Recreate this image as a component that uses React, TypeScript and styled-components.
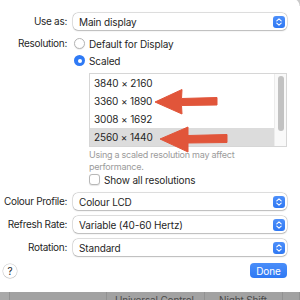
import * as React from 'react';
import styled, { createGlobalStyle } from 'styled-components';

const GlobalStyle = createGlobalStyle`
  html, body {
    margin: 0;
    padding: 0;
    background: #fff;
  }
  body {
    font-family: Inter, "Liberation Sans", sans-serif;
    color: #1f1f1f;
    letter-spacing: -0.15px;
    -webkit-font-smoothing: antialiased;
  }
`;

const Sheet = styled.div`
  position: relative;
  width: 300px;
  height: 300px;
  overflow: hidden;
  background: #fff;
  box-sizing: border-box;
  padding-top: 13px;
  display: flex;
  flex-direction: column;
`;

const Corner = styled.div`
  position: absolute;
  top: 0;
  right: 0;
  width: 8px;
  height: 6px;
  background: radial-gradient(circle at 0 100%, transparent 7px, #c9c9c9 8px);
`;

const FormRow = styled.div<{ $top?: number }>`
  display: grid;
  grid-template-columns: 67px 214px;
  column-gap: 6px;
  align-items: center;
  margin-top: ${p => p.$top ?? 0}px;
`;

const Label = styled.span<{ $start?: boolean }>`
  text-align: right;
  font-size: 10px;
  line-height: 17px;
  letter-spacing: -0.3px;
  white-space: nowrap;
  align-self: ${p => (p.$start ? 'start' : 'center')};
`;

const SelectBox = styled.div`
  height: 17px;
  box-sizing: border-box;
  display: flex;
  align-items: center;
  justify-content: space-between;
  padding: 0 2px 0 6px;
  background: #fff;
  border-radius: 5px;
  box-shadow: 0 0 0 0.5px rgba(0, 0, 0, 0.2), 0 0.5px 1.5px rgba(0, 0, 0, 0.2);
  font-size: 10px;
`;

const Stepper = styled.span`
  width: 12px;
  height: 12px;
  border-radius: 3px;
  background: linear-gradient(#4d8ffa, #2f78f3);
  display: flex;
  align-items: center;
  justify-content: center;
`;

const Options = styled.div`
  display: flex;
  flex-direction: column;
`;

const RadioRow = styled.label`
  display: flex;
  align-items: center;
  gap: 4px;
  height: 17px;
  padding-left: 1px;
  font-size: 10px;
`;

const RadioDot = styled.span<{ $on?: boolean }>`
  width: 11px;
  height: 11px;
  border-radius: 50%;
  box-sizing: border-box;
  background: ${p => (p.$on ? '#2f7af5' : '#fff')};
  border: ${p => (p.$on ? 'none' : '0.5px solid #b5b5b5')};
  box-shadow: ${p => (p.$on ? 'none' : '0 0.5px 1px rgba(0,0,0,0.12)')};
  display: flex;
  align-items: center;
  justify-content: center;
  &::after {
    content: '';
    display: ${p => (p.$on ? 'block' : 'none')};
    width: 4px;
    height: 4px;
    border-radius: 50%;
    background: #fff;
  }
`;

const ResolutionList = styled.div`
  margin: 4px 0 0 16px;
  height: 74px;
  box-sizing: border-box;
  border: 1px solid #d6d6d6;
  display: flex;
  background: #fff;
`;

const ResolutionRows = styled.ul`
  list-style: none;
  margin: 0;
  padding: 0;
  flex: 1;
`;

const ResolutionItem = styled.li<{ $selected?: boolean }>`
  height: 18px;
  line-height: 18px;
  padding-left: 4px;
  font-size: 10px;
  background: ${p => (p.$selected ? '#dcdcdc' : 'transparent')};
`;

const ScrollTrack = styled.div`
  width: 11px;
  background: #f9f9f9;
  border-left: 1px solid #ececec;
  display: flex;
  justify-content: center;
  padding-top: 2px;
`;

const ScrollThumb = styled.div`
  width: 6px;
  height: 55px;
  border-radius: 3px;
  background: #c2c2c2;
`;

const Hint = styled.p`
  margin: 2px 0 0 16px;
  font-size: 9px;
  line-height: 12px;
  letter-spacing: -0.25px;
  color: #9b9b9b;
`;

const CheckRow = styled.label`
  margin-left: 16px;
  height: 13px;
  display: flex;
  align-items: center;
  gap: 4px;
  font-size: 10px;
`;

const CheckBox = styled.span`
  width: 11px;
  height: 11px;
  box-sizing: border-box;
  border-radius: 3px;
  border: 0.5px solid #b8b8b8;
  background: #fff;
  box-shadow: 0 0.5px 1px rgba(0, 0, 0, 0.1);
`;

const Footer = styled.div`
  margin-top: 7px;
  height: 15px;
  display: flex;
  align-items: center;
  justify-content: space-between;
  padding: 0 13px 0 3px;
`;

const HelpButton = styled.span`
  width: 14px;
  height: 14px;
  border-radius: 50%;
  box-sizing: border-box;
  background: #fff;
  box-shadow: 0 0 0 0.5px rgba(0, 0, 0, 0.2), 0 0.5px 1px rgba(0, 0, 0, 0.15);
  display: flex;
  align-items: center;
  justify-content: center;
  font-size: 10px;
`;

const DoneButton = styled.button`
  width: 37px;
  height: 15px;
  border: none;
  border-radius: 4px;
  background: linear-gradient(#4a8ef9, #2f79f4);
  color: #fff;
  font-family: inherit;
  font-size: 10px;
  letter-spacing: -0.1px;
  padding: 0;
`;

const Backdrop = styled.div`
  margin-top: 14px;
  height: 8px;
  overflow: hidden;
  display: flex;
  background: #a2a2a2;
`;

const BackdropCell = styled.div<{ $w: number; $pad?: number; $shade?: string }>`
  width: ${p => p.$w}px;
  flex-shrink: 0;
  box-sizing: border-box;
  padding: 2px 0 0 ${p => p.$pad ?? 0}px;
  border-right: 1px solid #929292;
  background: ${p => p.$shade ?? 'transparent'};
  font-size: 10px;
  line-height: 12px;
  color: #4a4a4a;
  white-space: nowrap;
`;

const Annotations = styled.svg`
  position: absolute;
  inset: 0;
  pointer-events: none;
`;

const Chevrons = () => (
  <svg width="8" height="10" viewBox="0 0 8 10">
    <path d="M1.8 3.8 L4 1.8 L6.2 3.8 M1.8 6.2 L4 8.2 L6.2 6.2" fill="none" stroke="#fff" strokeWidth="1.1" strokeLinecap="round" strokeLinejoin="round" />
  </svg>
);

const Select: React.FC<{ value: string }> = ({ value }) => (
  <SelectBox>
    <span>{value}</span>
    <Stepper>
      <Chevrons />
    </Stepper>
  </SelectBox>
);

const resolutions = ['3840 × 2160', '3360 × 1890', '3008 × 1692', '2560 × 1440'];

export default function App() {
  return (
    <Sheet>
      <GlobalStyle />
      <Corner />
      <FormRow>
        <Label>Use as:</Label>
        <Select value="Main display" />
      </FormRow>
      <FormRow $top={5}>
        <Label $start>Resolution:</Label>
        <Options>
          <RadioRow>
            <RadioDot />
            Default for Display
          </RadioRow>
          <RadioRow>
            <RadioDot $on />
            Scaled
          </RadioRow>
          <ResolutionList>
            <ResolutionRows>
              {resolutions.map((r, i) => (
                <ResolutionItem key={r} $selected={i === 3}>
                  {r}
                </ResolutionItem>
              ))}
            </ResolutionRows>
            <ScrollTrack>
              <ScrollThumb />
            </ScrollTrack>
          </ResolutionList>
          <Hint>
            Using a scaled resolution may affect
            <br />
            performance.
          </Hint>
          <CheckRow>
            <CheckBox />
            Show all resolutions
          </CheckRow>
        </Options>
      </FormRow>
      <FormRow $top={7}>
        <Label>Colour Profile:</Label>
        <Select value="Colour LCD" />
      </FormRow>
      <FormRow $top={6}>
        <Label>Refresh Rate:</Label>
        <Select value="Variable (40-60 Hertz)" />
      </FormRow>
      <FormRow $top={6}>
        <Label>Rotation:</Label>
        <Select value="Standard" />
      </FormRow>
      <Footer>
        <HelpButton>?</HelpButton>
        <DoneButton>Done</DoneButton>
      </Footer>
      <Backdrop>
        <BackdropCell $w={10} $shade="#a9a9a9" />
        <BackdropCell $w={97} />
        <BackdropCell $w={98} $pad={8}>Universal Control</BackdropCell>
        <BackdropCell $w={78} $pad={14}>Night Shift</BackdropCell>
        <BackdropCell $w={17} />
      </Backdrop>
      <Annotations width="300" height="300" viewBox="0 0 300 300">
        <polygon
          points="155,102 182,89.5 181.5,98.5 217,97.5 217,105 181.5,105.5 182,114"
          fill="#e1553a"
          stroke="#e1553a"
          strokeWidth="1"
          strokeLinejoin="round"
        />
        <polygon
          points="160,139 188,127 188,135.5 227,134.5 227,142.5 188,143 188,152"
          fill="#e1553a"
          stroke="#e1553a"
          strokeWidth="1"
          strokeLinejoin="round"
        />
      </Annotations>
    </Sheet>
  );
}
